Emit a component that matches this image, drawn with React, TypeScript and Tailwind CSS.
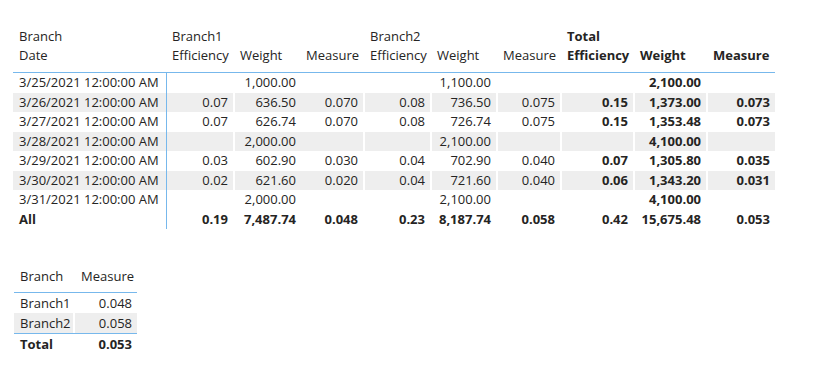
import React from "react";

const BLUE = "border-[#77b8ec]";

type Col = { w: string; gap: boolean; bold?: boolean };

const cols: Col[] = [
  { w: "w-[68px]", gap: true },
  { w: "w-[66px]", gap: false },
  { w: "w-[64px]", gap: true },
  { w: "w-[67px]", gap: true },
  { w: "w-[66px]", gap: true },
  { w: "w-[64px]", gap: true },
  { w: "w-[73px]", gap: true, bold: true },
  { w: "w-[73px]", gap: true, bold: true },
  { w: "w-[67px]", gap: false, bold: true },
];

const rows: string[][] = [
  ["3/25/2021 12:00:00 AM", "", "1,000.00", "", "", "1,100.00", "", "", "2,100.00", ""],
  ["3/26/2021 12:00:00 AM", "0.07", "636.50", "0.070", "0.08", "736.50", "0.075", "0.15", "1,373.00", "0.073"],
  ["3/27/2021 12:00:00 AM", "0.07", "626.74", "0.070", "0.08", "726.74", "0.075", "0.15", "1,353.48", "0.073"],
  ["3/28/2021 12:00:00 AM", "", "2,000.00", "", "", "2,100.00", "", "", "4,100.00", ""],
  ["3/29/2021 12:00:00 AM", "0.03", "602.90", "0.030", "0.04", "702.90", "0.040", "0.07", "1,305.80", "0.035"],
  ["3/30/2021 12:00:00 AM", "0.02", "621.60", "0.020", "0.04", "721.60", "0.040", "0.06", "1,343.20", "0.031"],
  ["3/31/2021 12:00:00 AM", "", "2,000.00", "", "", "2,100.00", "", "", "4,100.00", ""],
];

const totalRow = ["All", "0.19", "7,487.74", "0.048", "0.23", "8,187.74", "0.058", "0.42", "15,675.48", "0.053"];

const headTop = ["Branch1", "", "", "Branch2", "", "", "Total", "", ""];
const headBottom = ["Efficiency", "Weight", "Measure", "Efficiency", "Weight", "Measure", "Efficiency", "Weight", "Measure"];

function Matrix() {
  return (
    <div className="ml-[13px] pt-[27px]">
      {/* column headers */}
      <div className={`flex border-b ${BLUE} w-[762px] pb-[8px]`}>
        <div className="w-[154px] pl-[6px]">
          <div className="h-[19px] flex items-center">Branch</div>
          <div className="h-[18px] flex items-center">Date</div>
        </div>
        {cols.map((c, i) => (
          <div key={i} className={`${c.w} pl-[5px] ${c.bold ? "font-bold" : ""}`}>
            <div className="h-[19px] flex items-center">{headTop[i]}</div>
            <div className="h-[18px] flex items-center">{headBottom[i]}</div>
          </div>
        ))}
      </div>

      {rows.map((r, ri) => (
        <div key={ri} className={`flex h-[19.5px] w-[762px] ${ri % 2 === 1 ? "bg-[#eeeeee]" : ""}`}>
          <div className={`w-[154px] pl-[6px] flex items-center border-r ${BLUE}`}>{r[0]}</div>
          {cols.map((c, i) => (
            <div
              key={i}
              className={`${c.w} pr-[5px] flex items-center justify-end ${c.gap ? "border-r-2 border-white" : ""} ${c.bold ? "font-bold" : ""}`}
            >
              {r[i + 1]}
            </div>
          ))}
        </div>
      ))}

      <div className="flex h-[19.5px] w-[762px] font-bold">
        <div className={`w-[154px] pl-[6px] flex items-center border-r ${BLUE}`}>{totalRow[0]}</div>
        {cols.map((c, i) => (
          <div key={i} className={`${c.w} pr-[5px] flex items-center justify-end ${c.gap ? "border-r-2 border-transparent" : ""}`}>
            {totalRow[i + 1]}
          </div>
        ))}
      </div>
    </div>
  );
}

function SmallTable() {
  return (
    <div className="ml-[14px] mt-[38px] w-[123px]">
      <div className={`flex h-[26px] pb-[6.5px] border-b ${BLUE}`}>
        <div className="w-[61px] pl-[6px] flex items-center">Branch</div>
        <div className="w-[62px] pl-[6px] flex items-center">Measure</div>
      </div>
      <div className="flex h-[20px]">
        <div className="w-[61px] pl-[6px] flex items-center">Branch1</div>
        <div className="w-[62px] pr-[5px] flex items-center justify-end">0.048</div>
      </div>
      <div className={`flex h-[21px] bg-[#eeeeee] border-b ${BLUE}`}>
        <div className="w-[61px] pl-[6px] flex items-center border-r-2 border-white">Branch2</div>
        <div className="w-[62px] pr-[5px] flex items-center justify-end">0.058</div>
      </div>
      <div className="flex h-[20px] font-bold">
        <div className="w-[61px] pl-[6px] flex items-center">Total</div>
        <div className="w-[62px] pr-[5px] flex items-center justify-end">0.053</div>
      </div>
    </div>
  );
}

export default function App() {
  return (
    <div className="w-[818px] h-[385px] bg-white text-[#252423] text-[13px] leading-none whitespace-nowrap font-['Open_Sans',sans-serif] overflow-hidden">
      <Matrix />
      <SmallTable />
    </div>
  );
}
